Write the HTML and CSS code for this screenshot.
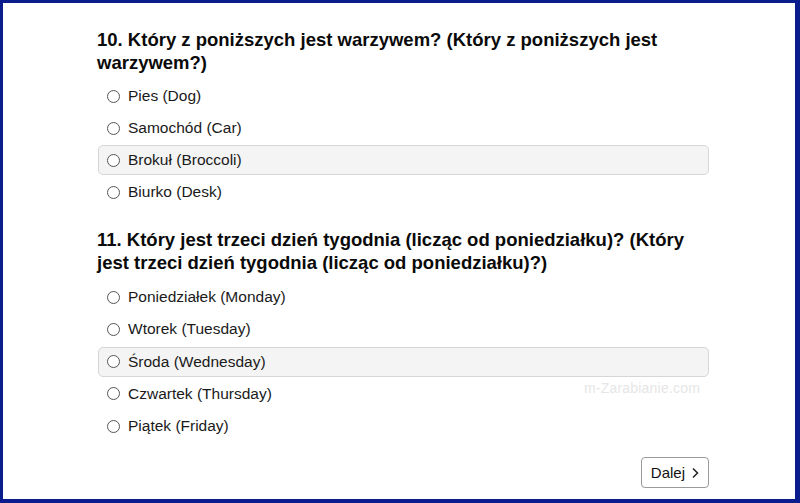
FILE: index.html
```html
<!DOCTYPE html>
<html lang="pl">
<head>
    <meta charset="UTF-8">
    <meta name="viewport" content="width=device-width, initial-scale=1.0">
    <title>Quiz</title>
    <link rel="stylesheet" href="styles.css">
</head>
<body>
<div class="frame">
    <div class="quiz">
        <div class="question">
            <h2>10. Który z poniższych jest warzywem? (Który z poniższych jest warzywem?)</h2>
            <label class="option"><span class="radio"></span>Pies (Dog)</label>
            <label class="option"><span class="radio"></span>Samochód (Car)</label>
            <label class="option selected"><span class="radio"></span>Brokuł (Broccoli)</label>
            <label class="option"><span class="radio"></span>Biurko (Desk)</label>
        </div>
        <div class="question">
            <h2>11. Który jest trzeci dzień tygodnia (licząc od poniedziałku)? (Który jest trzeci dzień tygodnia (licząc od poniedziałku)?)</h2>
            <label class="option"><span class="radio"></span>Poniedziałek (Monday)</label>
            <label class="option"><span class="radio"></span>Wtorek (Tuesday)</label>
            <label class="option selected"><span class="radio"></span>Środa (Wednesday)</label>
            <label class="option"><span class="radio"></span>Czwartek (Thursday)</label>
            <label class="option"><span class="radio"></span>Piątek (Friday)</label>
        </div>
        <div class="actions">
            <button class="next-btn">Dalej
                <svg width="10" height="12" viewBox="0 0 10 12"><path d="M3 1.5 L7.5 6 L3 10.5" fill="none" stroke="#222" stroke-width="1.5"/></svg>
            </button>
        </div>
    </div>
    <div class="watermark">m-Zarabianie.com</div>
</div>
</body>
</html>
```

FILE: styles.css
```css
body {
    margin: 0;
    padding: 0;
    font-family: 'Liberation Sans', Arial, sans-serif;
    color: #111;
    background: #fff;
}
.frame {
    position: relative;
    height: 503px;
    box-sizing: border-box;
    border-style: solid;
    border-color: #0b1d8c;
    border-width: 3px 5px 4px 3px;
    background: #fff;
}
.quiz {
    width: 612px;
    margin-left: 94px;
    padding-top: 25px;
}
.question {
    margin-bottom: 21px;
}
.question h2 {
    margin: 0 0 7px 0;
    font-size: 18.5px;
    line-height: 23px;
    font-weight: bold;
    color: #0a0a0a;
}
.question + .question h2 {
    margin-bottom: 8px;
}
.option {
    display: flex;
    align-items: center;
    height: 28px;
    margin-left: 1px;
    margin-bottom: 2px;
    padding: 0 8px;
    border: 1px solid transparent;
    border-radius: 5px;
    font-size: 15.5px;
    color: #1a1a1a;
}
.question + .question .option {
    margin-bottom: 2.25px;
}
.option.selected {
    background-color: #f4f4f4;
    border-color: #d6d6d6;
}
.radio {
    width: 11px;
    height: 11px;
    border: 1px solid #555;
    border-radius: 50%;
    margin-right: 8px;
    background: #fff;
}
.actions {
    display: flex;
    justify-content: flex-end;
    margin-top: -5px;
}
.next-btn {
    display: flex;
    align-items: center;
    gap: 5px;
    height: 31px;
    padding: 0 8px 0 9px;
    border: 1px solid #9a9a9a;
    border-radius: 4px;
    background: #fff;
    font-family: 'Liberation Sans', Arial, sans-serif;
    font-size: 15px;
    color: #111;
}
.watermark {
    position: absolute;
    left: 581px;
    top: 377px;
    font-size: 14px;
    color: #e6e6e6;
    letter-spacing: 0.2px;
}
```
